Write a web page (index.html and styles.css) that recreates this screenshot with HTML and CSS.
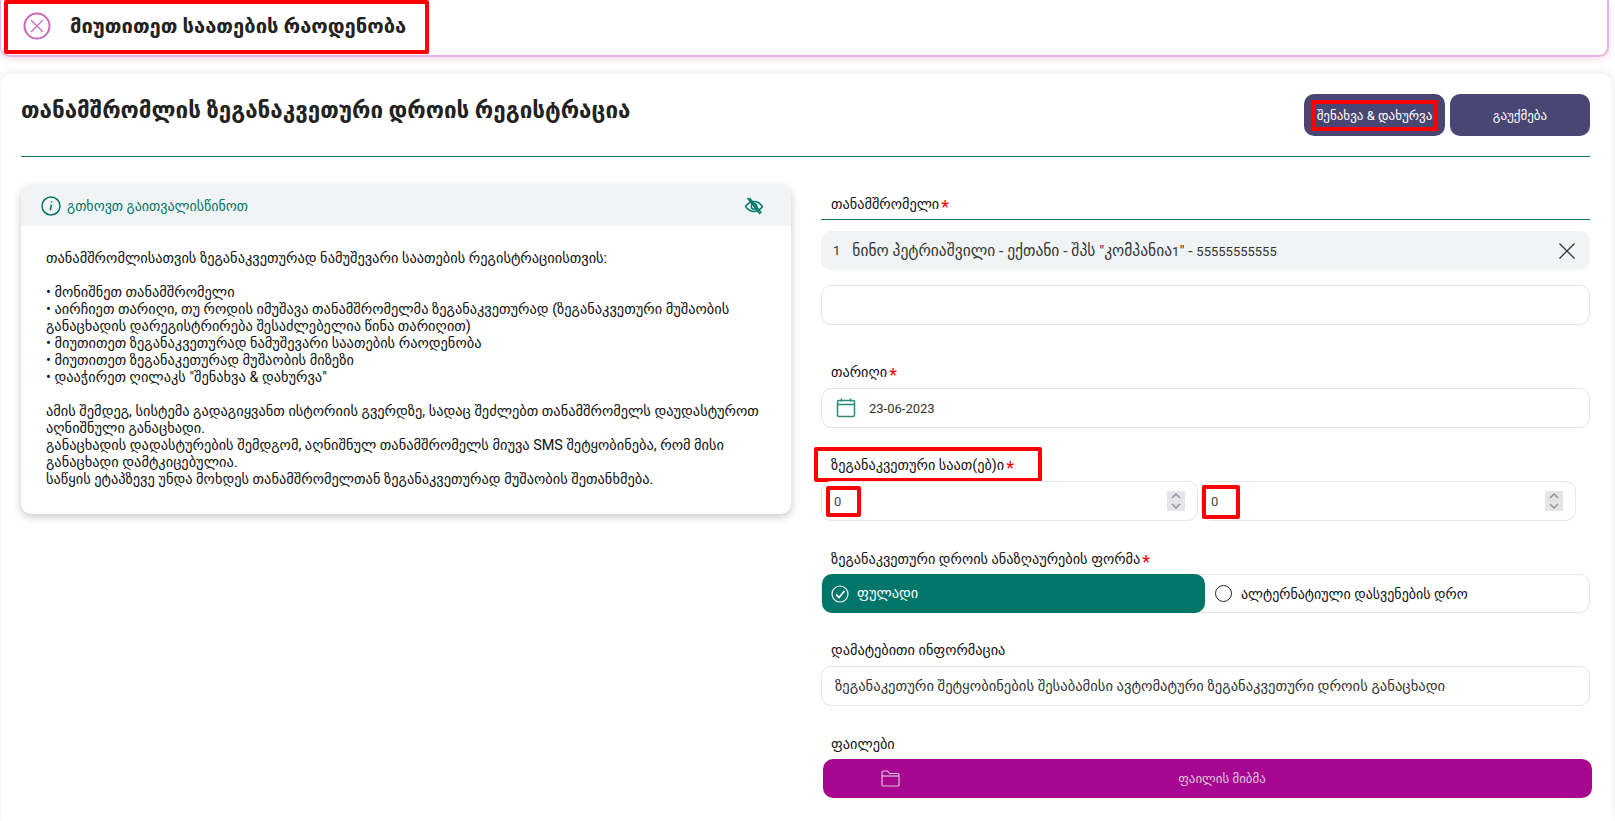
FILE: index.html

```html
<!DOCTYPE html>
<html lang="ka">
<head>
    <meta charset="UTF-8">
    <title>ზეგანაკვეთური დროის რეგისტრაცია</title>
    <link rel="stylesheet" href="styles.css">
</head>
<body>
    <div class="alert">
        <svg class="alert-icon" width="28" height="28" viewBox="0 0 28 28" fill="none" stroke="#c868bd">
            <circle cx="14" cy="14" r="12.5" stroke-width="2"/>
            <path d="M8 8l12 12M20 8L8 20" stroke-width="1.2"/>
        </svg>
        <span class="alert-text">მიუთითეთ საათების რაოდენობა</span>
        <span class="mark mark-alert"></span>
    </div>

    <div class="card">
        <div class="card-head">
            <h1>თანამშრომლის ზეგანაკვეთური დროის რეგისტრაცია</h1>
            <div class="actions">
                <button class="btn btn-save">შენახვა &amp; დახურვა<span class="mark mark-save"></span></button>
                <button class="btn">გაუქმება</button>
            </div>
        </div>

        <div class="columns">
            <div class="note">
                <div class="note-head">
                    <svg width="20" height="20" viewBox="0 0 20 20" fill="none" stroke="#00766a">
                        <circle cx="10" cy="10" r="9" stroke-width="1.5"/>
                        <path d="M10.6 5.2v1.2M10.4 8.6L9.3 14.4" stroke-width="1.6"/>
                    </svg>
                    <span class="note-title">გთხოვთ გაითვალისწინოთ</span>
                    <svg class="note-eye" width="20" height="18" viewBox="0 0 20 18" fill="none" stroke="#00766a" stroke-width="1.4">
                        <path d="M1.500 9.500c2.500-3.500 5-5 8.500-5s6 1.500 8.500 5c-2.500 3.500-5 5-8.500 5s-6-1.500-8.500-5z"/>
                        <circle cx="10" cy="9.500" r="2.700"/>
                        <path d="M3.500 1l12.500 16M5.500 1l12 15"/>
                    </svg>
                </div>
                <div class="note-body">
                    <p>თანამშრომლისათვის ზეგანაკვეთურად ნამუშევარი საათების რეგისტრაციისთვის:</p>
                    <p>• მონიშნეთ თანამშრომელი<br>
                    • აირჩიეთ თარიღი, თუ როდის იმუშავა თანამშრომელმა ზეგანაკვეთურად (ზეგანაკვეთური მუშაობის განაცხადის დარეგისტრირება შესაძლებელია წინა თარიღით)<br>
                    • მიუთითეთ ზეგანაკვეთურად ნამუშევარი საათების რაოდენობა<br>
                    • მიუთითეთ ზეგანაკეთურად მუშაობის მიზეზი<br>
                    • დააჭირეთ ღილაკს "შენახვა &amp; დახურვა"</p>
                    <p>ამის შემდეგ, სისტემა გადაგიყვანთ ისტორიის გვერდზე, სადაც შეძლებთ თანამშრომელს დაუდასტუროთ აღნიშნული განაცხადი.<br>
                    განაცხადის დადასტურების შემდგომ, აღნიშნულ თანამშრომელს მიუვა SMS შეტყობინება, რომ მისი განაცხადი დამტკიცებულია.<br>
                    საწყის ეტაპზევე უნდა მოხდეს თანამშრომელთან ზეგანაკვეთურად მუშაობის შეთანხმება.</p>
                </div>
            </div>

            <div class="form">
                <div class="label label-line">თანამშრომელი<span class="req">*</span></div>
                <div class="chip">
                    <span class="chip-num">1</span>
                    <span class="chip-text">ნინო პეტრიაშვილი - ექთანი - შპს "კომპანია<span class="latin">1</span>" - <span class="latin">55555555555</span></span>
                    <svg width="18" height="18" viewBox="0 0 18 18" fill="none" stroke="#333" stroke-width="1.3">
                        <path d="M1.500 1.500l15 15M16.500 1.500l-15 15"/>
                    </svg>
                </div>
                <div class="field field-empty"></div>

                <div class="label label-date">თარიღი<span class="req">*</span></div>
                <div class="field">
                    <svg class="cal" width="20" height="20" viewBox="0 0 20 20" fill="none" stroke="#2f8a7d" stroke-width="1.5">
                        <rect x="1.500" y="2.500" width="17" height="16" rx="1.500"/>
                        <path d="M1.500 6.500h17M5.500 0.500v3M14.500 0.500v3"/>
                    </svg>
                    <span class="field-value">23-06-2023</span>
                </div>

                <div class="label label-hours">ზეგანაკვეთური საათ(ებ)ი<span class="req">*</span><span class="mark mark-hours"></span></div>
                <div class="hours">
                    <div class="field num num-first">
                        <span class="num-value">0</span>
                        <svg class="spin" width="18" height="20" viewBox="0 0 18 20" fill="none" stroke="#8c8c96" stroke-width="1.3">
                            <rect width="18" height="20" fill="#e4e4e9" stroke="none"/>
                            <path d="M5 7l4-4 4 4M5 13l4 4 4-4"/>
                        </svg>
                        <span class="mark mark-num1"></span>
                    </div>
                    <div class="field num num-second">
                        <span class="num-value">0</span>
                        <svg class="spin" width="18" height="20" viewBox="0 0 18 20" fill="none" stroke="#8c8c96" stroke-width="1.3">
                            <rect width="18" height="20" fill="#e4e4e9" stroke="none"/>
                            <path d="M5 7l4-4 4 4M5 13l4 4 4-4"/>
                        </svg>
                        <span class="mark mark-num2"></span>
                    </div>
                </div>

                <div class="label label-pay">ზეგანაკვეთური დროის ანაზღაურების ფორმა<span class="req">*</span></div>
                <div class="toggle">
                    <div class="toggle-on">
                        <svg width="18" height="18" viewBox="0 0 18 18" fill="none" stroke="#fff">
                            <circle cx="9" cy="9" r="8" stroke-width="1.2"/>
                            <path d="M5 9.500l3 3 5.500-6.500" stroke-width="1.800"/>
                        </svg>
                        <span>ფულადი</span>
                    </div>
                    <div class="toggle-off">
                        <span class="radio"></span>
                        <span>ალტერნატიული დასვენების დრო</span>
                    </div>
                </div>

                <div class="label label-info">დამატებითი ინფორმაცია</div>
                <div class="field field-text">ზეგანაკეთური შეტყობინების შესაბამისი ავტომატური ზეგანაკვეთური დროის განაცხადი</div>

                <div class="label label-files">ფაილები</div>
                <div class="upload">
                    <svg width="19" height="17" viewBox="0 0 19 17" fill="none" stroke="#d9c3d6" stroke-width="1.200">
                        <path d="M1 15V2.500C1 1.700 1.700 1 2.500 1h4l2 2.500h8c.8 0 1.500.7 1.500 1.500v10c0 .6-.5 1-1 1H2c-.6 0-1-.4-1-1z"/>
                        <path d="M1 6h17"/>
                    </svg>
                    <span class="upload-text">ფაილის მიბმა</span>
                </div>
            </div>
        </div>
    </div>
</body>
</html>
```

FILE: styles.css

```css
html, body {
    height: 100%;
    overflow: hidden;
}
body {
    display: flex;
    flex-direction: column;
    margin: 0;
    background-color: #fff;
    font-family: Roboto, "DejaVu Sans", sans-serif;
    font-size: 13px;
    color: #333;
}
.mark {
    position: absolute;
    border: 4px solid #f00;
    border-radius: 2px;
    box-sizing: border-box;
    pointer-events: none;
}
.latin {
    font-size: 13px;
}
.req {
    color: #f00;
    font-size: 18px;
    line-height: 12px;
    margin-left: 2px;
    vertical-align: -4px;
}

/* top alert */
.alert {
    position: relative;
    display: flex;
    flex: none;
    align-items: center;
    height: 57px;
    width: 1609px;
    box-sizing: border-box;
    padding: 0 0 3px 22px;
    background-color: #fff;
    border: solid #e3b3e3;
    border-width: 0 2px 2px 1px;
    border-radius: 0 0 10px 10px;
    box-shadow: 0 2px 6px rgba(200, 104, 189, .25);
}
.alert-text {
    margin-left: 19px;
    font-size: 20.2px;
    font-weight: 700;
    color: #222;
}
.mark-alert {
    left: 3px;
    top: 0;
    width: 425px;
    height: 54px;
}

/* main card */
.card {
    flex: 1;
    min-height: 0;
    overflow: hidden;
    margin: 17px 3px 0 1px;
    padding: 20px 22px 0 20px;
    background-color: #fff;
    border-radius: 10px 10px 0 0;
    box-shadow: 0 -2px 10px rgba(0, 0, 0, .08);
}
.card-head {
    display: flex;
    justify-content: space-between;
    height: 62px;
    border-bottom: 1px solid #00766a;
}
.card-head h1 {
    margin: 3px 0 0;
    font-size: 22.4px;
    font-weight: 700;
    color: #222;
}
.actions {
    display: flex;
    gap: 5px;
}
.btn {
    position: relative;
    width: 140px;
    height: 42px;
    border: none;
    border-radius: 10px;
    background-color: #4a4674;
    color: #fff;
    font-family: inherit;
    font-size: 13px;
    padding: 0;
}
.btn-save {
    width: 141px;
}
.mark-save {
    left: 7px;
    top: 6px;
    width: 127px;
    height: 31px;
}
.columns {
    display: flex;
    gap: 30px;
    margin: 28px 0 0;
}

/* left note */
.note {
    width: 770px;
    flex: none;
    height: 329px;
    border-radius: 10px;
    background-color: #fff;
    box-shadow: 0 3px 8px rgba(0, 0, 0, .22);
}
.note-head {
    display: flex;
    align-items: center;
    gap: 6px;
    height: 41px;
    padding: 0 27px 0 20px;
    background-color: #f1f4f5;
    border-radius: 10px 10px 0 0;
}
.note-title {
    font-size: 14px;
    color: #00766a;
}
.note-eye {
    margin-left: auto;
}
.note-body {
    padding: 24px 22px 0 25px;
    font-size: 14.4px;
    line-height: 17px;
    color: #111;
}
.note-body p {
    margin: 0 0 17px;
}

/* right form */
.form {
    flex: 1;
    min-width: 0;
}
.label {
    position: relative;
    padding-left: 10px;
    font-size: 14.3px;
    line-height: 17px;
    color: #111;
}
.label-line {
    margin-top: 11px;
    padding-bottom: 6px;
    border-bottom: 1px solid #00766a;
}
.chip {
    display: flex;
    align-items: center;
    height: 39px;
    margin-top: 11px;
    padding: 0 14px 0 12px;
    background-color: #f1f4f5;
    border-radius: 10px;
}
.chip-num {
    margin-right: 12px;
}
.chip-text {
    flex: 1;
    font-size: 15.5px;
}
.field {
    position: relative;
    display: flex;
    align-items: center;
    box-sizing: border-box;
    height: 40px;
    border: 1px solid #e4e6e8;
    border-radius: 10px;
    background-color: #fff;
}
.field-empty {
    margin-top: 15px;
}
.label-date {
    margin-top: 39px;
    margin-bottom: 7px;
}
.cal {
    margin-left: 14px;
}
.field-value {
    margin-left: 13px;
}
.label-hours {
    margin-top: 29px;
    margin-bottom: 7px;
}
.mark-hours {
    left: -7px;
    top: -10px;
    width: 228px;
    height: 35px;
}
.hours {
    display: flex;
    gap: 3px;
    width: 755px;
}
.num {
    justify-content: space-between;
    padding: 0 12px;
}
.num-first {
    flex: none;
    width: 377px;
}
.num-second {
    flex: 1;
    padding-left: 9px;
}
.num-value {
    color: #444;
}
.mark-num1 {
    left: 4px;
    top: 4px;
    width: 35px;
    height: 31px;
}
.mark-num2 {
    left: 0;
    top: 3px;
    width: 38px;
    height: 34px;
}
.label-pay {
    margin-top: 30px;
    margin-bottom: 6px;
}
.toggle {
    display: flex;
    height: 39px;
    border: 1px solid #e4e6e8;
    border-radius: 10px;
    box-sizing: border-box;
}
.toggle-on {
    display: flex;
    align-items: center;
    gap: 8px;
    width: 383px;
    padding-left: 9px;
    box-sizing: border-box;
    margin: -1px 0;
    background-color: #00766a;
    border-radius: 10px;
    color: #fff;
    font-size: 14.4px;
}
.toggle-off {
    display: flex;
    align-items: center;
    gap: 9px;
    padding-left: 10px;
    font-size: 14px;
    color: #111;
}
.radio {
    width: 15px;
    height: 15px;
    border: 1px solid #222;
    border-radius: 50%;
}
.label-info {
    margin-top: 29px;
    margin-bottom: 7px;
}
.field-text {
    padding-left: 13px;
    font-size: 14.6px;
    color: #333;
}
.label-files {
    margin-top: 30px;
    margin-bottom: 6px;
}
.upload {
    display: flex;
    align-items: center;
    height: 39px;
    margin: 0 -2px 0 2px;
    padding-left: 58px;
    background-color: #a80891;
    border-radius: 10px;
    font-size: 12.9px;
    color: #d9c3d6;
}
.upload-text {
    flex: 1;
    text-align: center;
    padding-right: 48px;
}
```
